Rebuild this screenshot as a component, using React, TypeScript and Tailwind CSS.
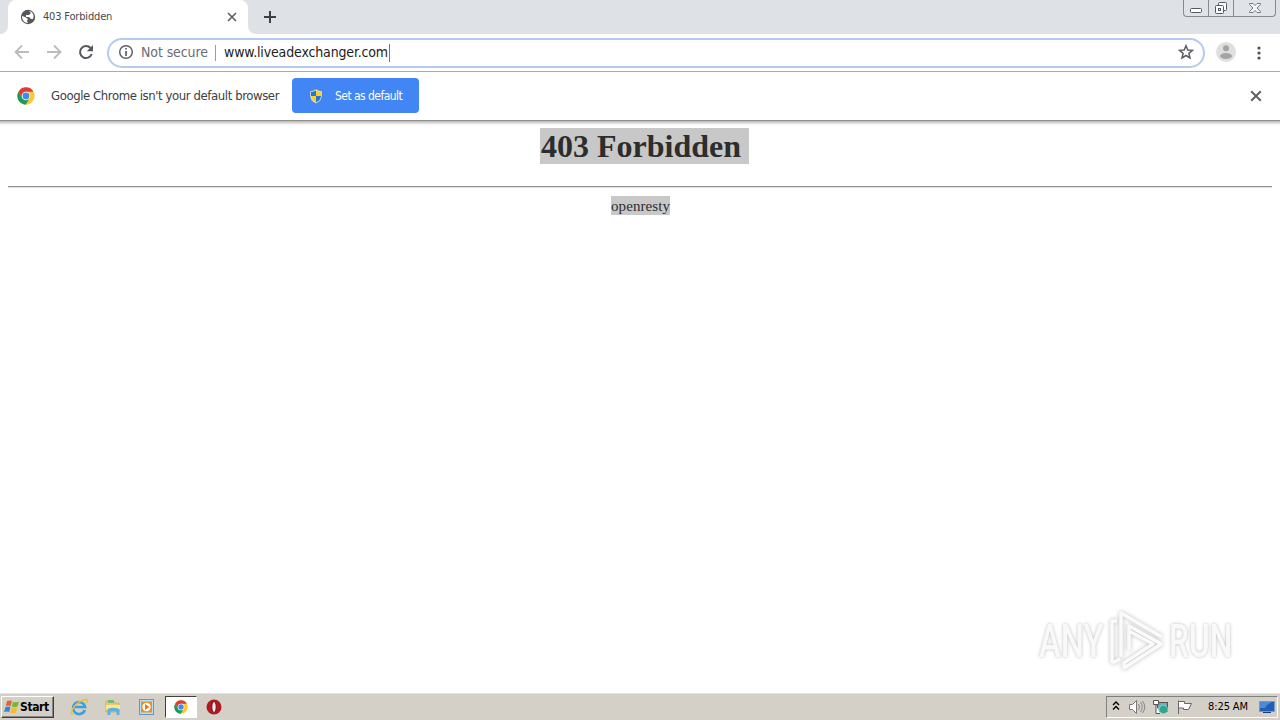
import React from "react";

const ui = "font-['DejaVu_Sans_Condensed','DejaVu_Sans',sans-serif]";

function ChromeLogo({ size }: { size: number }) {
  return (
    <svg width={size} height={size} viewBox="0 0 48 48" className="shrink-0">
      <circle cx="24" cy="24" r="23" fill="#fbc831" />
      <path d="M4 12.5A23 23 0 0 0 23 47L34 29 24 34 14 29Z" fill="#1b9b58" />
      <path d="M4 12.5A23 23 0 0 1 44 12.5H24L14 29Z" fill="#db3f31" />
      <circle cx="24" cy="24" r="11.5" fill="#fff" />
      <circle cx="24" cy="24" r="9.2" fill="#4587f3" />
    </svg>
  );
}

function Cross({ size, color, width }: { size: number; color: string; width: number }) {
  return (
    <svg width={size} height={size} viewBox="0 0 10 10" className="shrink-0">
      <path d="M1 1 9 9M9 1 1 9" stroke={color} strokeWidth={width} fill="none" />
    </svg>
  );
}

function TabStrip() {
  return (
    <div className="flex h-[34px] bg-[#dee1e6]">
      <div className="h-full w-2 bg-white">
        <div className="h-full w-full rounded-br-lg bg-[#dee1e6]" />
      </div>
      <div className="flex h-full w-60 items-center rounded-t-lg bg-white pl-3">
        <svg width="16" height="16" viewBox="0 0 16 16">
          <circle cx="8" cy="8" r="7.2" fill="#54575b" />
          <path d="M2 7 5 8 8 10 7 12 8 14C4 14 2 11 2 7ZM9 2 11 4 9 6 6 6 6 8 9 8 11 10 13 10C15 6 12 2 9 2Z" fill="#fff" />
        </svg>
        <span className={`${ui} ml-[7px] w-[184px] whitespace-nowrap text-[11px] tracking-[-0.17px] text-[#45494d]`}>403 Forbidden</span>
        <Cross size={10} color="#5f6368" width={1.7} />
      </div>
      <div className="h-full w-2 bg-white">
        <div className="h-full w-full rounded-bl-lg bg-[#dee1e6]" />
      </div>
      <svg width="12" height="12" viewBox="0 0 12 12" className="mt-[11px] ml-2">
        <path d="M6 0V12M0 6H12" stroke="#3c4043" strokeWidth="2" />
      </svg>
      <div className="mr-[4px] ml-auto flex h-[17px] w-[93px] rounded-b border border-t-0 border-[#868b93] bg-[#e0e3e8]">
        <div className="flex w-[25px] justify-center border-r border-[#868b93]">
          <svg width="14" height="16" viewBox="0 0 14 16"><rect x="1.5" y="8.5" width="11" height="4" rx="1" fill="#fff" stroke="#555961" /></svg>
        </div>
        <div className="flex w-[25px] justify-center border-r border-[#868b93]">
          <svg width="14" height="16" viewBox="0 0 14 16" fill="#fff" stroke="#555961">
            <rect x="4.5" y="2.5" width="8" height="8" rx="1" />
            <rect x="1.5" y="5.5" width="8" height="8" rx="1" />
            <rect x="4.5" y="8.5" width="2" height="2" />
          </svg>
        </div>
        <div className="flex flex-1 justify-center">
          <svg width="14" height="16" viewBox="0 0 14 16"><path d="M1.5 3.5H5L7 5.5 9 3.5H12.5V4.5L9 8 12.5 11.5V12.5H9L7 10.5 5 12.5H1.5V11.5L5 8 1.5 4.5Z" fill="#f5f6f8" stroke="#737780" /></svg>
        </div>
      </div>
    </div>
  );
}

function Toolbar() {
  return (
    <div className="flex h-[38px] items-center border-b border-[#a9abae] bg-white">
      <svg width="16" height="16" viewBox="0 0 16 16" className="mb-[2px] ml-[14px]"><path d="M15 8H2M8 1.5 1.5 8 8 14.5" fill="none" stroke="#babcbe" strokeWidth="1.8" /></svg>
      <svg width="16" height="16" viewBox="0 0 16 16" className="mb-[2px] ml-4"><path d="M1 8H14M8 1.5 14.5 8 8 14.5" fill="none" stroke="#babcbe" strokeWidth="1.8" /></svg>
      <svg width="16" height="16" viewBox="0 0 16 16" className="mb-[2px] ml-4"><path d="M13.7 10A6 6 0 1 1 12.5 4" fill="none" stroke="#54575b" strokeWidth="2" /><path d="M15 1V7.2H8.8Z" fill="#54575b" /></svg>
      <div className="ml-[13px] flex h-[30px] w-[1098px] items-center rounded-full border-2 border-[#b4cbf0] bg-white pr-[9px] pl-[9px]">
        <svg width="16" height="16" viewBox="0 0 16 16" className="mb-[2px]"><circle cx="8" cy="8" r="6.3" fill="none" stroke="#5f6368" strokeWidth="1.5" /><path d="M8 7V12M8 4V5.6" stroke="#5f6368" strokeWidth="1.7" /></svg>
        <span className={`${ui} ml-[7px] w-[74px] whitespace-nowrap text-[14px] tracking-[-0.1px] text-[#6a6e72]`}>Not secure</span>
        <div className="h-4 w-px bg-[#9a9da0]" />
        <span className={`${ui} ml-2 w-[165px] whitespace-nowrap text-[14px] tracking-[-0.15px] text-[#222]`}>www.liveadexchanger.com</span>
        <div className="h-[18px] w-px bg-[#777]" />
        <svg width="16" height="16" viewBox="0 0 16 16" className="mb-[2px] ml-auto"><path d="M8 1.7 9.8 6 14.5 6.3 10.9 9.3 12 14 8 11.5 4 14 5.1 9.3 1.5 6.3 6.2 6Z" fill="none" stroke="#5a5d62" strokeWidth="1.5" /></svg>
      </div>
      <svg width="20" height="20" viewBox="0 0 20 20" className="mb-[2px] ml-[11px]"><circle cx="10" cy="10" r="10" fill="#dfdfdf" /><circle cx="10" cy="6.2" r="3" fill="#a4a4a4" /><ellipse cx="10" cy="14" rx="6" ry="3" fill="#a4a4a4" /></svg>
      <svg width="4" height="14" viewBox="0 0 4 14" className="ml-[21px]" fill="#4d5054"><circle cx="2" cy="2" r="1.6" /><circle cx="2" cy="7" r="1.6" /><circle cx="2" cy="12" r="1.6" /></svg>
    </div>
  );
}

function InfoBar() {
  return (
    <div className="flex h-[49px] items-center border-b border-[#8e8e8e] bg-white pb-px pl-[17px]">
      <ChromeLogo size={18} />
      <span className={`${ui} ml-4 w-[241px] whitespace-nowrap text-[13px] tracking-[-0.41px] text-[#3c4043]`}>Google Chrome isn't your default browser</span>
      <button className="flex h-[35px] w-[127px] items-center rounded bg-[#4285f4] pl-4">
        <svg width="16" height="16" viewBox="0 0 16 16">
          <path d="M8 1C6 2.5 4 3 2 3V7C2 11 4 14 8 15.5 12 14 14 11 14 7V3C12 3 10 2.5 8 1Z" fill="#e9eef2" stroke="#6b7d91" strokeWidth=".5" />
          <path d="M8 2.3C6.4 3.3 5 3.8 3 4V8H8Z" fill="#2875cc" /><path d="M8 2.3C9.6 3.3 11 3.8 13 4V8H8Z" fill="#f6cf35" />
          <path d="M3 8C3.2 11 5 13.2 8 14.5V8Z" fill="#f6cf35" /><path d="M13 8C12.8 11 11 13.2 8 14.5V8Z" fill="#2875cc" />
        </svg>
        <span className={`${ui} ml-[11px] whitespace-nowrap text-[12px] tracking-[-0.54px] text-white`}>Set as default</span>
      </button>
      <div className="mr-[18px] ml-auto flex"><Cross size={12} color="#5f6368" width={1.7} /></div>
    </div>
  );
}

function Watermark() {
  const word = "inline-block font-['Roboto',sans-serif] text-[46px] leading-none font-medium text-[#f9f9f9] [text-shadow:0_0_4px_#bbb]";
  return (
    <div className="absolute right-[39px] bottom-[20px] flex h-16 w-[202px] items-center">
      <div className="w-[68px]"><span className={`${word} origin-left scale-x-[0.71]`}>ANY</span></div>
      <svg width="62" height="64" viewBox="0 0 62 64" className="shrink-0 drop-shadow-[0_0_2px_#bbb]" fill="none" stroke="#fafafa" strokeWidth="3.5" strokeLinejoin="round">
        <path d="M14 48V4L55 28" />
        <path d="M22 41V17L54 35 17 59V54L46 35 22 22" />
        <path d="M5 54V12H10M5 54 13 50" />
      </svg>
      <div className="w-[68px]"><span className={`${word} origin-left scale-x-[0.69]`}>RUN</span></div>
    </div>
  );
}

function Page() {
  return (
    <main className="relative flex-1 bg-white px-2 font-['Liberation_Serif',serif] text-[#2d2d2d]">
      <div className="-mx-2 h-1 bg-linear-to-b from-[#b7b7b7] to-white" />
      <h1 className="mt-[3px] flex h-9 justify-center">
        <span className="ml-[9px] h-9 w-[209px] bg-[#c8c8c8] pl-px text-[32px] leading-[37px] font-bold whitespace-nowrap">403 Forbidden</span>
      </h1>
      <div className="mt-[22px] h-[2px] border-t border-[#929292] bg-[#e0e0e0]" />
      <div className="mt-2 flex justify-center"><span className="ml-px h-[19px] w-[59px] bg-[#c8c8c8] text-[15px] leading-[21px] tracking-[0.08px]">openresty</span></div>
      <Watermark />
    </main>
  );
}

function Taskbar() {
  return (
    <footer className="flex h-[27px] items-center border-t border-[#e7e3dc] bg-[#d4d0c8]">
      <button className="ml-px flex h-[22px] w-[53px] items-center border border-t-white border-r-[#404040] border-b-[#404040] border-l-white pl-[2px] shadow-[inset_-1px_-1px_0_#858585]">
        <svg width="16" height="16" viewBox="0 0 16 16" className="shrink-0">
          <path d="M3 2Q6 1 8 2L6.8 7Q4 6 1.8 7Z" fill="#e4652b" /><path d="M9 2.7Q12 4 15 2.5L13.6 7.4Q11 9 7.8 7.5Z" fill="#77b83b" />
          <path d="M1.5 8Q4 7 6.5 8L5.2 13Q3 12 0 13Z" fill="#3b83d2" /><path d="M7.5 8.6Q10 10 13.2 8.6L12 13.5Q9 15 6.2 13.6Z" fill="#f6ba30" />
        </svg>
        <span className={`${ui} text-[12px] font-bold tracking-[-0.4px] text-black`}>Start</span>
      </button>
      <svg width="18" height="18" viewBox="0 0 18 18" className="ml-[16px]">
        <path d="M14.8 12A6 6 0 1 1 15 9H4.5" fill="none" stroke="#3c9fde" strokeWidth="2.6" />
        <path d="M3 16C-1 17 3 7 11 3 17 0 18 2 16.5 5" fill="none" stroke="#edbd3a" strokeWidth="1.5" />
      </svg>
      <svg width="18" height="18" viewBox="0 0 18 18" className="ml-4"><path d="M2 3H7L9 5H15V14H2Z" fill="#edcc62" stroke="#c6a64b" strokeWidth=".7" /><path d="M4 2H10V5H4Z" fill="#77b87a" /><path d="M2 7H16V12H2Z" fill="#f8e5a0" /><path d="M3.5 17V11Q9 8.5 15.5 11V17H12.5V13.5H6.5V17Z" fill="#61b1dc" /></svg>
      <svg width="18" height="18" viewBox="0 0 18 18" className="ml-4"><rect x="1.5" y="1.5" width="14" height="15" fill="#bddcf2" stroke="#5c9ac9" /><rect x="3" y="3.5" width="11" height="11" fill="#ed8d23" /><circle cx="8.5" cy="9" r="4.2" fill="#fff" /><path d="M7 6V12L11.5 9Z" fill="#e57b16" /></svg>
      <div className="ml-[9px] flex h-[22px] w-8 items-center justify-center border border-t-[#404040] border-r-white border-b-white border-l-[#404040] bg-white pr-px"><ChromeLogo size={14} /></div>
      <svg width="16" height="16" viewBox="0 0 16 16" className="ml-[9px]"><circle cx="8" cy="8" r="7.5" fill="#ae1a20" /><ellipse cx="8" cy="8" rx="2.2" ry="5.5" fill="#eee" stroke="#7b0b12" /></svg>
      <div className="mr-[2px] ml-auto flex h-[22px] w-[172px] items-center border border-t-[#808080] border-r-white border-b-white border-l-[#808080]">
        <svg width="8" height="10" viewBox="0 0 8 10" className="mb-[2px] ml-[5px]"><path d="M1 4 4 1 7 4M1 8.5 4 5.5 7 8.5" fill="none" stroke="#000" strokeWidth="1.4" /></svg>
        <svg width="18" height="16" viewBox="0 0 18 16" className="ml-[8px]"><path d="M1.5 5.5H4.5L8.5 1.5V14.5L4.5 10.5H1.5Z" fill="#fff" stroke="#777" /><path d="M10.5 5Q12.5 8 10.5 11M12.5 3Q16 8 12.5 13M14.5 2Q19 8 14.5 14" fill="none" stroke="#888" /></svg>
        <svg width="17" height="16" viewBox="0 0 17 16" className="ml-[6px]">
          <rect x="5.5" y="3.5" width="10" height="9" fill="#69afc0" stroke="#555" />
          <path d="M1.5 1.5H6.5V5.5H1.5ZM4 6V14.5H8" fill="#fff" stroke="#555" strokeWidth="1" />
          <circle cx="11.5" cy="10.5" r="4.3" fill="#31a68c" stroke="#c9dedb" strokeWidth=".6" />
        </svg>
        <svg width="17" height="16" viewBox="0 0 17 16" className="ml-[7px]"><path d="M2.5 15V1.5M3 2.5H8.5V4.5H15.5L12.5 10.5H7.5V9H3" fill="#fff" stroke="#666" /></svg>
        <span className={`${ui} ml-[15px] w-[50px] text-[11px] tracking-[-0.1px] whitespace-nowrap text-black`}>8:25 AM</span>
        <svg width="16" height="14" viewBox="0 0 16 14" className="ml-px"><rect x=".5" y="1.5" width="15" height="10" fill="#235eb2" stroke="#679ed3" /><path d="M1 2H13Q8 4 6 8 4 8 1 8Z" fill="#4c8bd3" /><path d="M4 12.5H12" stroke="#173e7a" /></svg>
      </div>
    </footer>
  );
}

export default function App() {
  return (
    <div className="flex h-[720px] w-[1280px] flex-col overflow-hidden bg-white">
      <TabStrip />
      <Toolbar />
      <InfoBar />
      <Page />
      <Taskbar />
    </div>
  );
}
